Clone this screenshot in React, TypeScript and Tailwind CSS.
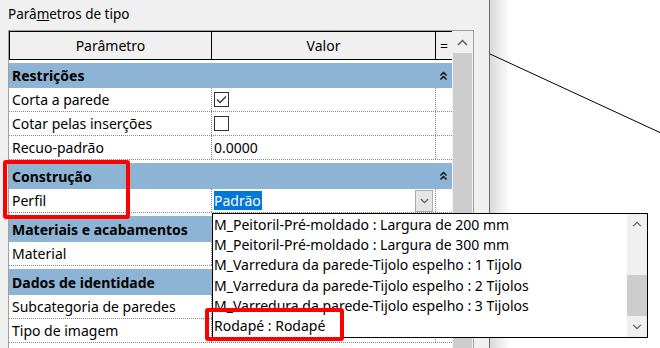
import React from "react";

const font = { fontFamily: '"Noto Sans", "Open Sans", sans-serif' };

function DoubleCaret() {
  return (
    <svg width="9" height="10" viewBox="0 0 9 10" className="block">
      <path d="M1.5 4.5 L4.5 1.5 L7.5 4.5" fill="none" stroke="#000" strokeWidth="1.4" />
      <path d="M1.5 8.5 L4.5 5.5 L7.5 8.5" fill="none" stroke="#000" strokeWidth="1.4" />
    </svg>
  );
}

function Chevron({ up, color = "#606060", w = 11, h = 7 }: { up?: boolean; color?: string; w?: number; h?: number }) {
  return (
    <svg width={w} height={h} viewBox="0 0 11 7" className="block">
      <path
        d={up ? "M1 6 L5.5 1.5 L10 6" : "M1 1 L5.5 5.5 L10 1"}
        fill="none"
        stroke={color}
        strokeWidth="1.5"
      />
    </svg>
  );
}

function Checkbox({ checked }: { checked?: boolean }) {
  return (
    <div className="w-[15px] h-[15px] border border-[#333] bg-white flex items-center justify-center">
      {checked && (
        <svg width="11" height="9" viewBox="0 0 11 9">
          <path d="M1 4.5 L4 7.5 L10 1.5" fill="none" stroke="#333" strokeWidth="1.3" />
        </svg>
      )}
    </div>
  );
}

function Group({ label, first }: { label: string; first?: boolean }) {
  return (
    <div className={first ? "pt-[3px] h-[28px]" : "pt-[3px] h-[29px]"}>
      <div className="h-full bg-[#8eb4d5] flex items-center">
        <div className="flex-1 pl-[3px] font-bold text-black">{label}</div>
        <div className="w-[16px] flex justify-center pr-[2px]">
          <DoubleCaret />
        </div>
      </div>
    </div>
  );
}

function Row({ label, children }: { label: string; children?: React.ReactNode }) {
  return (
    <div className="h-[24px] flex border-b border-dotted border-[#8a8a8a] bg-white">
      <div className="w-[203px] pl-[3px] flex items-center border-r border-dotted border-[#8a8a8a] text-black">
        {label}
      </div>
      <div className="w-[224px] pl-[2px] flex items-center border-r border-dotted border-[#8a8a8a] text-black">
        {children}
      </div>
      <div className="flex-1" />
    </div>
  );
}

const items = [
  "M_Peitoril-Pré-moldado : Largura de 200 mm",
  "M_Peitoril-Pré-moldado : Largura de 300 mm",
  "M_Varredura da parede-Tijolo espelho : 1 Tijolo",
  "M_Varredura da parede-Tijolo espelho : 2 Tijolos",
  "M_Varredura da parede-Tijolo espelho : 3 Tijolos",
  "Rodapé : Rodapé",
];

export default function App() {
  return (
    <div className="relative w-[660px] h-[348px] flex overflow-hidden text-[14px] bg-white" style={font}>
      {/* Type properties panel */}
      <div className="w-[490px] h-full bg-[#f0f0f0] border-r border-[#6a6a6a] flex flex-col">
        <div className="h-[30px] pl-[8px] pt-[4px] text-[13.5px] text-black">
          Parâ<span className="underline">m</span>etros de tipo
        </div>
        <div className="ml-[8px] w-[466px] flex-1 flex border-t border-l border-r border-[#a0a0a0]">
          {/* grid */}
          <div className="w-[443px] flex flex-col">
            <div className="h-[29px] flex border border-r-0 border-black bg-[#f0f0f0] text-black">
              <div className="w-[202px] flex items-center justify-center border-r border-black">Parâmetro</div>
              <div className="w-[224px] flex items-center justify-center border-r border-black">Valor</div>
              <div className="flex-1 flex items-center justify-center">=</div>
            </div>
            <div className="flex-1 bg-white">
              <Group label="Restrições" first />
              <Row label="Corta a parede">
                <Checkbox checked />
              </Row>
              <Row label="Cotar pelas inserções">
                <Checkbox />
              </Row>
              <Row label="Recuo-padrão">0.0000</Row>
              <Group label="Construção" />
              <Row label="Perfil">
                <div className="flex-1 flex items-center justify-between pr-[2px]">
                  <span className="bg-[#0078d7] text-white h-[19px] leading-[19px] pr-[1px]">Padrão</span>
                  <div className="w-[18px] h-[22px] bg-[#e5e5e5] border border-[#acacac] flex items-center justify-center">
                    <Chevron w={9} h={6} />
                  </div>
                </div>
              </Row>
              <Group label="Materiais e acabamentos" />
              <Row label="Material" />
              <Group label="Dados de identidade" />
              <Row label="Subcategoria de paredes" />
              <Row label="Tipo de imagem" />
            </div>
          </div>
          {/* scrollbar */}
          <div className="flex-1 bg-[#f0f0f0] flex flex-col items-center">
            <div className="h-[22px] flex items-center justify-center">
              <Chevron up />
            </div>
            <div className="w-[19px] flex-1 bg-[#cdcdcd]" />
          </div>
        </div>
      </div>

      {/* drawing area */}
      <div className="relative flex-1 h-full bg-gradient-to-r from-[#d9d9d9] via-white via-[12%] to-white">
        <svg width="170" height="348" className="absolute left-0 top-0">
          <line x1="0" y1="54" x2="171" y2="133" stroke="#000" strokeWidth="1" />
        </svg>
      </div>

      {/* dropdown list */}
      <div className="absolute left-[212px] top-[213px] w-[436px] h-[125px] border border-black bg-white flex">
        <div className="flex-1 flex flex-col text-black">
          {items.map((t) => (
            <div key={t} className="h-[20.3px] flex items-center pl-[1px] whitespace-nowrap">
              {t}
            </div>
          ))}
        </div>
        <div className="w-[20px] bg-[#f0f0f0] flex flex-col items-center">
          <div className="h-[20px] flex items-center justify-center">
            <Chevron up w={10} h={6} />
          </div>
          <div className="h-[41px] mt-[41px] w-[20px] bg-[#cdcdcd]" />
          <div className="flex-1 flex items-center justify-center">
            <Chevron w={10} h={6} />
          </div>
        </div>
      </div>

      {/* red highlight boxes */}
      <div className="absolute left-[3px] top-[160px] w-[127px] h-[59px] border-4 border-[#ff0000] rounded-[3px]" />
      <div className="absolute left-[205px] top-[308px] w-[139px] h-[33px] border-4 border-[#ff0000] rounded-[3px]" />
    </div>
  );
}
